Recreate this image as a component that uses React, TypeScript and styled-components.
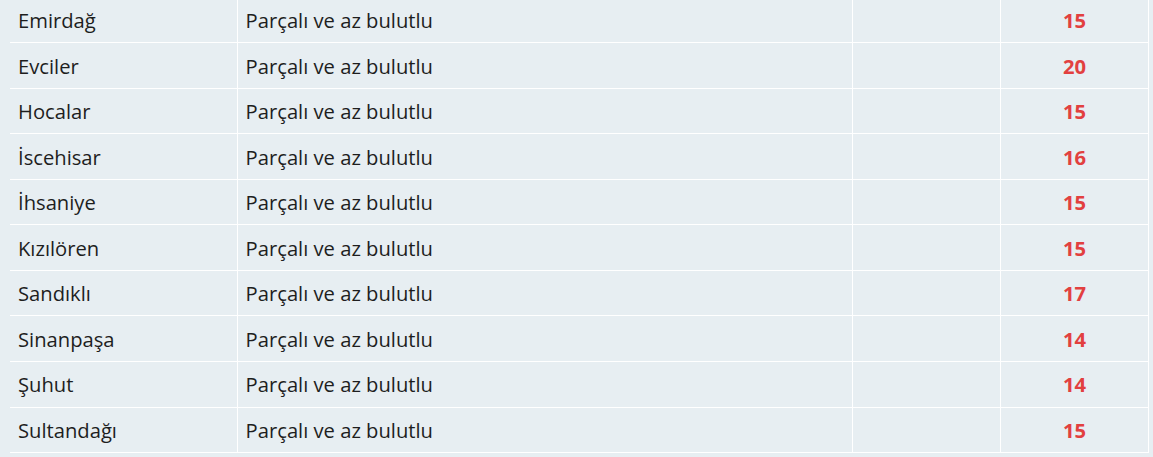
import React from "react";
import styled, { createGlobalStyle } from "styled-components";

const GlobalStyle = createGlobalStyle`
    html, body {
        margin: 0;
        padding: 0;
        background-color: #e7eef2;
        overflow: hidden;
    }
`;

type Row = {
    district: string;
    condition: string;
    temp: number;
};

const rows: Row[] = [
    { district: "Emirdağ", condition: "Parçalı ve az bulutlu", temp: 15 },
    { district: "Evciler", condition: "Parçalı ve az bulutlu", temp: 20 },
    { district: "Hocalar", condition: "Parçalı ve az bulutlu", temp: 15 },
    { district: "İscehisar", condition: "Parçalı ve az bulutlu", temp: 16 },
    { district: "İhsaniye", condition: "Parçalı ve az bulutlu", temp: 15 },
    { district: "Kızılören", condition: "Parçalı ve az bulutlu", temp: 15 },
    { district: "Sandıklı", condition: "Parçalı ve az bulutlu", temp: 17 },
    { district: "Sinanpaşa", condition: "Parçalı ve az bulutlu", temp: 14 },
    { district: "Şuhut", condition: "Parçalı ve az bulutlu", temp: 14 },
    { district: "Sultandağı", condition: "Parçalı ve az bulutlu", temp: 15 },
];

export default function App() {
    return (
        <Page>
            <GlobalStyle />
            <WeatherTable>
                <tbody>
                    {rows.map((row) => (
                        <tr key={row.district}>
                            <Cell>{row.district}</Cell>
                            <Cell>{row.condition}</Cell>
                            <Cell />
                            <Cell $temp>{row.temp}</Cell>
                        </tr>
                    ))}
                </tbody>
            </WeatherTable>
        </Page>
    );
}

const Page = styled.div`
    padding: 0 4px 0 10px;
    font-family: "Open Sans", "Noto Sans", sans-serif;
`;

const WeatherTable = styled.table`
    width: 1139px;
    margin-top: -3px;
    border-collapse: collapse;
    table-layout: fixed;

    td:nth-child(1) {
        width: 227px;
    }
    td:nth-child(2) {
        width: 615px;
    }
    td:nth-child(3),
    td:nth-child(4) {
        width: 148px;
    }
`;

const Cell = styled.td<{ $temp?: boolean }>`
    box-sizing: border-box;
    padding: 10.5px 8px 9.5px;
    height: 45.56px;
    line-height: 24.56px;
    font-size: 20.2px;
    color: ${(p) => (p.$temp ? "#e2403f" : "#1e1e1e")};
    font-weight: ${(p) => (p.$temp ? 700 : 400)};
    text-align: ${(p) => (p.$temp ? "center" : "left")};
    white-space: nowrap;
    border: 1px solid #ffffff;
    border-top: none;

    &:first-child {
        border-left: none;
    }
`;
